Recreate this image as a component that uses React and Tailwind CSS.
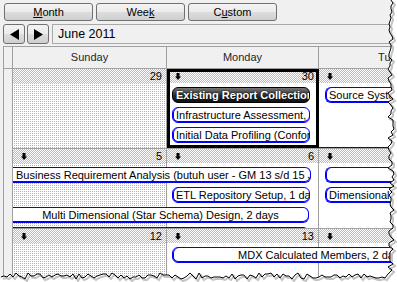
import React from 'react';

const FONT = "font-['Liberation_Sans',Arial,sans-serif]";
const HATCH = '[background-image:repeating-conic-gradient(#bcbcbc_0_25%,#ffffff_0_50%)] [background-size:2px_2px]';
const DOTS = '[background-image:conic-gradient(#b4b4b4_0_25%,#ffffff_0)] [background-size:2px_2px]';

function ToolButton({ pre, u, post }) {
  return (
    <button className="w-[89px] h-[18px] rounded-[3px] border border-[#707070] bg-[linear-gradient(#f3f3f3_0%,#ebebeb_50%,#dddddd_51%,#cfcfcf_100%)] text-[11px] leading-[16px] text-black">
      {pre}<span className="underline underline-offset-[1px]">{u}</span>{post}
    </button>
  );
}

function NavButton({ dir }) {
  return (
    <button className="w-[22px] h-[20px] rounded-[3px] border border-[#707070] bg-[linear-gradient(#f3f3f3_0%,#ebebeb_50%,#dddddd_51%,#cfcfcf_100%)] flex items-center justify-center">
      <svg width="9" height="11" viewBox="0 0 9 11">
        {dir === 'left' ? <path d="M9 0v11L0 5.5z" fill="#000" /> : <path d="M0 0v11l9-5.5z" fill="#000" />}
      </svg>
    </button>
  );
}

function Arrow() {
  return (
    <svg width="6" height="7" viewBox="0 0 6 7" className="ml-[8px]">
      <path d="M1.5 0h3v3.5H6L3 7 0 3.5h1.5z" fill="#000" />
    </svg>
  );
}

function Day({ col, num, arrow, weekend, selected, last }) {
  return (
    <div className={`${col} row-start-1 row-end-6 flex flex-col ${last ? '' : 'border-r border-[#a0a0a0]'} ${weekend ? DOTS : 'bg-white'} ${selected ? 'outline-[3px] outline-black -outline-offset-[3px]' : ''}`}>
      <div className={`h-[14px] flex items-center justify-between pr-[4px] text-[11px] leading-[14px] ${HATCH}`}>
        {arrow ? <Arrow /> : <span />}
        <span>{num}</span>
      </div>
    </div>
  );
}

function Pill({ pos, children, dark, openLeft, openRight, align = 'text-left' }) {
  let shape;
  if (dark) {
    shape = 'rounded-[6px] border border-black bg-[linear-gradient(#777777,#2a2a2a_55%,#111111)] text-white font-bold [text-shadow:0_0_2px_#000]';
  } else if (openLeft && openRight) {
    shape = 'bg-white border-y border-[#0000ff] shadow-[inset_0_-1px_0_#0000ff]';
  } else if (openLeft) {
    shape = 'bg-white border-y border-r border-[#0000ff] rounded-r-[6px] shadow-[inset_0_-1px_0_#0000ff]';
  } else if (openRight) {
    shape = 'bg-white border-y border-l border-[#0000ff] rounded-l-[6px] shadow-[inset_1px_0_0_#0000ff,inset_0_-1px_0_#0000ff]';
  } else {
    shape = 'bg-white border border-[#0000ff] rounded-[6px] shadow-[inset_1px_0_0_#0000ff,inset_0_-1px_0_#0000ff]';
  }
  return (
    <div className={`${pos} h-[16px] px-[3px] text-[11px] leading-[14px] whitespace-nowrap overflow-hidden ${align} ${shape}`}>
      {children}
    </div>
  );
}

function Week({ days, children, last }) {
  return (
    <div className="flex">
      <div className="w-[10px] shrink-0 border-x border-[#a0a0a0]" />
      <div className={`grid grid-cols-[154px_152px_160px] grid-rows-[14px_16px_16px_16px_1px] gap-y-[4px] h-[80px] overflow-hidden shrink-0 ${last ? '' : 'border-b border-[#a0a0a0]'}`}>
        <Day col="col-start-1" {...days[0]} />
        <Day col="col-start-2" {...days[1]} />
        <Day col="col-start-3" {...days[2]} last />
        {children}
      </div>
    </div>
  );
}

function rnd(i) {
  const x = Math.sin(i * 91.7 + 3.1) * 43758.5453;
  return x - Math.floor(x);
}

function TornEdge() {
  const right = [];
  for (let y = 0; y <= 272; y += 3) right.push([391 + Math.round((rnd(y) - 0.5) * 6), y]);
  const bottom = [];
  for (let x = 388; x >= 0; x -= 3) bottom.push([x, 276 + Math.round((rnd(x + 500) - 0.5) * 6)]);
  const edge = [...right, ...bottom];
  const pts = edge.map(p => p.join(',')).join(' ');
  const shadow = edge.map(([x, y]) => `${x + 2},${y + 2}`).join(' ');
  return (
    <svg className="absolute inset-0 pointer-events-none" width="397" height="282">
      <polygon points={`397,0 ${pts} 0,282 397,282`} fill="#fff" />
      <polyline points={shadow} fill="none" stroke="#c4c4c4" strokeWidth="2" />
      <polyline points={pts} fill="none" stroke="#000" strokeWidth="1" />
    </svg>
  );
}

export default function App() {
  return (
    <div className={`relative w-[397px] h-[282px] overflow-hidden bg-[#f0f0f0] text-black ${FONT}`}>
      <div className="flex gap-[3px] pl-[4px] pt-[3px]">
        <ToolButton pre="" u="M" post="onth" />
        <ToolButton pre="Wee" u="k" post="" />
        <ToolButton pre="C" u="u" post="stom" />
      </div>

      <div className="flex gap-[2px] pl-[3px] mt-[3px]">
        <NavButton dir="left" />
        <NavButton dir="right" />
        <div className="flex-1 h-[20px] ml-[1px] border border-[#a8a8a8] pl-[5px] text-[12.5px] leading-[18px]">June 2011</div>
      </div>

      <div className="ml-[3px] mt-[2px] w-max">
        <div className="flex h-[23px] border-y border-[#a0a0a0] text-[11px] leading-[21px] text-[#1f1f2e]">
          <div className="w-[10px] border-x border-[#a0a0a0]" />
          <div className="w-[154px] border-r border-[#a0a0a0] text-center">Sunday</div>
          <div className="w-[152px] border-r border-[#a0a0a0] text-center">Monday</div>
          <div className="w-[160px] text-center">Tuesday</div>
        </div>

        <Week days={[{ num: 29, weekend: true }, { num: 30, arrow: true, selected: true }, { num: 31, arrow: true }]}>
          <Pill pos="col-start-2 row-start-2 ml-[5px] mr-[9px]" dark>Existing Report Collection, 2 days</Pill>
          <Pill pos="col-start-2 row-start-3 ml-[5px] mr-[9px]">Infrastructure Assessment, 1 day</Pill>
          <Pill pos="col-start-2 row-start-4 ml-[5px] mr-[9px]">Initial Data Profiling (Conformed Dimension), 2 days</Pill>
          <Pill pos="col-start-3 row-start-2 ml-[6px]" openRight>Source System Analysis, 2 days</Pill>
          <Pill pos="col-start-3 row-start-5" openLeft openRight>Business Requirement Analysis</Pill>
        </Week>

        <Week days={[{ num: 5, arrow: true, weekend: true }, { num: 6, arrow: true }, { num: 7, arrow: true }]}>
          <Pill pos="col-start-1 col-span-2 row-start-2 mr-[8px]" openLeft>Business Requirement Analysis (butuh user - GM 13 s/d 15 Juni)</Pill>
          <Pill pos="col-start-3 row-start-2 ml-[6px]" openRight>{''}</Pill>
          <Pill pos="col-start-2 row-start-3 ml-[5px] mr-[9px]">ETL Repository Setup, 1 day</Pill>
          <Pill pos="col-start-3 row-start-3 ml-[6px]" openRight>Dimensional Operational Data Store, 3 days</Pill>
          <Pill pos="col-start-1 col-span-2 row-start-4 mr-[10px]" openLeft align="text-center">Multi Dimensional (Star Schema) Design, 2 days</Pill>
          <Pill pos="col-start-1 col-span-2 row-start-5 mr-[10px]" openLeft>Cube Design</Pill>
        </Week>

        <Week last days={[{ num: 12, arrow: true, weekend: true }, { num: 13, arrow: true }, { num: 14, arrow: true }]}>
          <Pill pos="col-start-2 col-span-2 row-start-2 ml-[5px] mr-[8px]" align="text-center">MDX Calculated Members, 2 days</Pill>
        </Week>
      </div>

      <TornEdge />
    </div>
  );
}
